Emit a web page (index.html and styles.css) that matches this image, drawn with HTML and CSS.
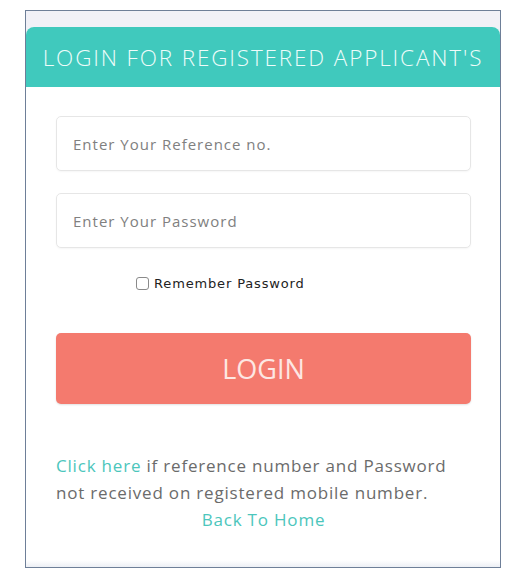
FILE: index.html
```html
<!DOCTYPE html>
<html>
<head>
<meta charset="utf-8">
<link rel="stylesheet" href="styles.css">
</head>
<body>
<div class="frame">
  <div class="panel">
    <div class="panel-head">LOGIN FOR REGISTERED APPLICANT'S</div>
    <form class="panel-body">
      <input class="field" type="text" placeholder="Enter Your Reference no.">
      <input class="field" type="password" placeholder="Enter Your Password">
      <label class="remember"><span class="box"></span>Remember Password</label>
      <button class="login" type="button">LOGIN</button>
      <p class="note"><a class="link" href="#">Click here</a> if reference number and Password not received on registered mobile number.</p>
      <p class="home"><a class="link" href="#">Back To Home</a></p>
    </form>
    <div class="panel-foot"></div>
  </div>
</div>
</body>
</html>
```
FILE: styles.css
```css
html, body {
  margin: 0;
  padding: 0;
  background: #ffffff;
}
.frame {
  margin: 10px 0 0 25px;
  width: 474px;
  height: 540px;
  border: 1px solid #6e7f98;
  background: #f1f1f7;
  padding-top: 16px;
  box-sizing: content-box;
  display: flex;
  flex-direction: column;
}
.panel {
  flex: 1;
  display: flex;
  flex-direction: column;
  background: #ffffff;
  border-radius: 8px 8px 0 0;
  overflow: hidden;
}
.panel-head {
  height: 60px;
  flex: none;
  background: #40c9bd;
  color: #eefcfa;
  font-family: "Open Sans", sans-serif;
  font-weight: 300;
  font-size: 22.5px;
  display: flex;
  align-items: center;
  justify-content: center;
  letter-spacing: 1.85px;
  white-space: nowrap;
}
.panel-body {
  flex: 1;
  display: flex;
  flex-direction: column;
  padding: 29px 29px 0 30px;
  margin: 0;
}
.field {
  height: 55px;
  flex: none;
  box-sizing: border-box;
  border: 1px solid #e6e6e6;
  border-radius: 5px;
  padding: 0 16px;
  font-family: "Open Sans", sans-serif;
  font-size: 15px;
  letter-spacing: 1px;
  color: #555;
  outline: none;
  box-shadow: 0 1px 2px rgba(0,0,0,0.04);
}
.field::placeholder {
  color: #808080;
}
.field + .field {
  margin-top: 22px;
}
.remember {
  margin-top: 28px;
  display: flex;
  align-items: center;
  padding-left: 80px;
  height: 14px;
  font-family: "DejaVu Sans", sans-serif;
  font-size: 13px;
  color: #222;
  letter-spacing: 0.85px;
}
.box {
  width: 13px;
  height: 13px;
  border: 1px solid #8a8a8a;
  border-radius: 3px;
  margin-right: 5px;
  box-sizing: border-box;
  background: #fff;
}
.login {
  margin-top: 43px;
  height: 71px;
  flex: none;
  border: none;
  border-radius: 5px;
  background: #f47a6e;
  color: #fde7e3;
  font-family: "Open Sans", sans-serif;
  font-weight: 400;
  font-size: 27px;
  box-shadow: 0 1px 2px rgba(0,0,0,0.12);
}
.note {
  margin: 48px 0 0 0;
  font-family: "Open Sans", sans-serif;
  font-size: 17px;
  line-height: 27px;
  letter-spacing: 0.8px;
  color: #6b6b6b;
}
.home {
  margin: 0;
  text-align: center;
  font-family: "Open Sans", sans-serif;
  font-size: 17px;
  line-height: 27px;
  letter-spacing: 0.8px;
}
.link {
  color: #4cc6bc;
  text-decoration: none;
}
.panel-foot {
  height: 7px;
  flex: none;
  background: linear-gradient(#ffffff, #eceff5);
}
```
